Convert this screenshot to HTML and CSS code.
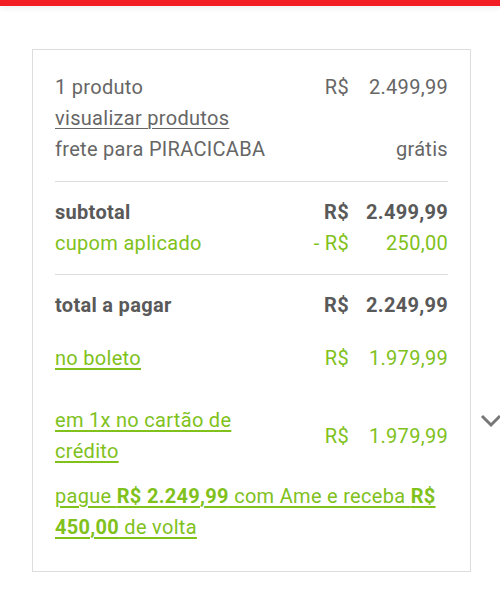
FILE: index.html
```html
<!DOCTYPE html>
<html lang="pt-BR">
<head>
  <meta charset="UTF-8">
  <title>Resumo do pedido</title>
  <link rel="stylesheet" href="styles.css">
</head>

<body>
  <div class="top-bar"></div>

  <section class="summary">
    <!-- produtos e frete -->
    <div class="block first">
      <div class="line">
        <span class="label">1 produto</span>
        <span class="cur">R$</span>
        <span class="amount">2.499,99</span>
      </div>
      <div class="line">
        <a class="label link" href="#">visualizar produtos</a>
      </div>
      <div class="line">
        <span class="label">frete para PIRACICABA</span>
        <span class="amount wide">grátis</span>
      </div>
    </div>

    <div class="block">
      <div class="line strong">
        <span class="label">subtotal</span>
        <span class="cur">R$</span>
        <span class="amount">2.499,99</span>
      </div>
      <div class="line green">
        <span class="label">cupom aplicado</span>
        <span class="cur">- R$</span>
        <span class="amount">250,00</span>
      </div>
    </div>

    <div class="block last">
      <div class="line strong">
        <span class="label">total a pagar</span>
        <span class="cur">R$</span>
        <span class="amount">2.249,99</span>
      </div>
    </div>

    <!-- formas de pagamento -->
    <div class="payment boleto">
      <a class="pay-label" href="#">no boleto</a>
      <span class="cur">R$</span>
      <span class="amount">1.979,99</span>
    </div>

    <div class="payment card-pay">
      <a class="pay-label" href="#">em 1x no cartão de crédito</a>
      <span class="cur">R$</span>
      <span class="amount">1.979,99</span>
      <svg class="chevron" width="22" height="15" viewBox="0 0 22 15">
        <path d="M2 3 L11 12 L20 3" fill="none" stroke="#777" stroke-width="3"/>
      </svg>
    </div>

    <a class="ame" href="#">pague <b>R$ 2.249,99</b> com Ame e receba <b>R$ 450,00</b> de volta</a>
  </section>
</body>
</html>
```

FILE: styles.css
```css
body {
  margin: 0;
  font-family: Roboto, "Noto Sans", Arial, sans-serif;
  font-size: 20px;
  letter-spacing: 0.3px;
  color: #666;
  background: #fff;
}

.top-bar {
  height: 6px;
  background: #f21d23;
  box-shadow: 0 2px 6px rgba(0, 0, 0, 0.08);
}

.summary {
  margin: 43px 0 0 32px;
  width: 393px;
  padding: 22px 22px 28px;
  border: 1px solid #ddd;
}

.block {
  padding: 15px 0;
  border-bottom: 1px solid #ddd;
}

.block.first {
  padding-top: 0;
  padding-bottom: 16px;
}

.block.last {
  border-bottom: none;
  padding-bottom: 0;
}

.line {
  display: grid;
  grid-template-columns: 1fr auto 99px;
  line-height: 31px;
}

.line .label {
  grid-column: 1;
}

.cur {
  text-align: right;
}

.amount {
  text-align: right;
}

.amount.wide {
  grid-column: 2 / 4;
}

.link {
  color: #666;
  text-decoration: underline;
  text-underline-offset: 3px;
  text-decoration-thickness: 1px;
}

.strong {
  font-weight: bold;
  color: #595959;
}

.green {
  color: #80c11c;
}

.payment {
  position: relative;
  display: grid;
  grid-template-columns: 1fr auto 99px;
  align-items: center;
  line-height: 31px;
  color: #80c11c;
}

.boleto {
  margin-top: 22px;
}

.card-pay {
  margin-top: 31px;
}

.pay-label {
  max-width: 200px;
  color: #80c11c;
  text-decoration: underline;
  text-underline-offset: 3px;
  text-decoration-thickness: 2px;
}

.chevron {
  position: absolute;
  right: -54px;
  top: 8px;
}

.ame {
  display: block;
  margin-top: 14px;
  line-height: 31px;
  color: #80c11c;
  text-decoration: underline;
  text-underline-offset: 3px;
  text-decoration-thickness: 2px;
}
```
